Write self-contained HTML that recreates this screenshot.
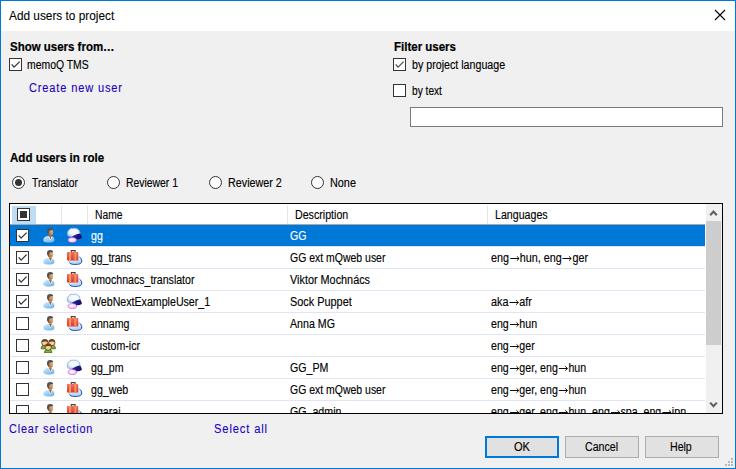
<!DOCTYPE html>
<html><head><meta charset="utf-8">
<style>
html,body{margin:0;padding:0;}
body{width:736px;height:469px;overflow:hidden;position:relative;background:#f0f0f0;font-family:"Liberation Sans",sans-serif;color:#000;}
.a{position:absolute;}
.t{position:absolute;white-space:pre;line-height:16px;transform-origin:0 0;}
.cb{position:absolute;width:11px;height:11px;border:1px solid #333;background:#fff;}
.cb svg{position:absolute;left:0;top:0;}
.rd{position:absolute;width:11px;height:11px;border:1px solid #333;border-radius:50%;background:#fff;}
.gl{position:absolute;left:0;width:695px;height:1px;background:#e3e3f6;}
.btn{position:absolute;top:436px;width:72px;height:20px;border:1px solid #adadad;background:#e1e1e1;}
</style></head><body>
<div class="a" style="left:0;top:0;width:734px;height:467px;border:1px solid #0078d7;"></div>
<div class="a" style="left:1px;top:1px;width:734px;height:30px;background:#fff;"></div>
<div class="t" style="left:9.20px;top:8px;letter-spacing:0.0px;transform:scaleX(0.9860);font-size:12px;-webkit-text-stroke:0.08px currentColor;">Add users to project</div>
<svg class="a" style="left:714px;top:9px" width="12" height="12" viewBox="0 0 12 12"><path d="M1 1L11 11M11 1L1 11" stroke="#000" stroke-width="1.1" fill="none"/></svg>
<div class="t" style="left:9.70px;top:39px;letter-spacing:0.0px;transform:scaleX(0.9565);font-size:12px;font-weight:bold;-webkit-text-stroke:0.22px currentColor;">Show users from…</div>
<div class="cb" style="left:9px;top:58px;"><svg width="11" height="11" viewBox="0 0 11 11"><path d="M1.7 5.4L4.1 8.1L9.6 2.6" stroke="#333" stroke-width="1.3" fill="none"/></svg></div>
<div class="t" style="left:27.40px;top:57px;letter-spacing:0.0px;transform:scaleX(0.8676);font-size:12px;-webkit-text-stroke:0.14px currentColor;">memoQ TMS</div>
<div class="t" style="left:28.70px;top:80px;letter-spacing:0.9px;transform:scaleX(0.9238);font-size:12px;color:#2200c0;-webkit-text-stroke:0.1px currentColor;">Create new user</div>
<div class="t" style="left:393.50px;top:39px;letter-spacing:0.0px;transform:scaleX(0.9578);font-size:12px;font-weight:bold;-webkit-text-stroke:0.22px currentColor;">Filter users</div>
<div class="cb" style="left:393px;top:58px;"><svg width="11" height="11" viewBox="0 0 11 11"><path d="M1.7 5.4L4.1 8.1L9.6 2.6" stroke="#505050" stroke-width="1.3" fill="none"/></svg></div>
<div class="t" style="left:411.50px;top:57px;letter-spacing:0.0px;transform:scaleX(0.8894);font-size:12px;-webkit-text-stroke:0.14px currentColor;">by project language</div>
<div class="cb" style="left:393px;top:84px;"></div>
<div class="t" style="left:411.50px;top:83px;letter-spacing:0.0px;transform:scaleX(0.8472);font-size:12px;-webkit-text-stroke:0.14px currentColor;">by text</div>
<div class="a" style="left:410px;top:107px;width:311px;height:18px;border:1px solid #7a7a7a;background:#fff;"></div>
<div class="t" style="left:9.70px;top:150px;letter-spacing:0.0px;transform:scaleX(0.9612);font-size:12px;font-weight:bold;-webkit-text-stroke:0.22px currentColor;">Add users in role</div>
<div class="rd" style="left:12px;top:176px;"></div>
<div class="a" style="left:15px;top:179px;width:7px;height:7px;border-radius:50%;background:#333;"></div>
<div class="t" style="left:31.50px;top:175px;letter-spacing:0.0px;transform:scaleX(0.8556);font-size:12px;-webkit-text-stroke:0.14px currentColor;">Translator</div>
<div class="rd" style="left:107px;top:176px;"></div>
<div class="t" style="left:126.23px;top:175px;letter-spacing:0.0px;transform:scaleX(0.8661);font-size:12px;-webkit-text-stroke:0.14px currentColor;">Reviewer 1</div>
<div class="rd" style="left:209px;top:176px;"></div>
<div class="t" style="left:227.50px;top:175px;letter-spacing:0.0px;transform:scaleX(0.8966);font-size:12px;-webkit-text-stroke:0.14px currentColor;">Reviewer 2</div>
<div class="rd" style="left:311px;top:176px;"></div>
<div class="t" style="left:329.70px;top:175px;letter-spacing:0.0px;transform:scaleX(0.9037);font-size:12px;-webkit-text-stroke:0.14px currentColor;">None</div>
<div class="a" style="left:9px;top:203px;width:712px;height:209px;border:1px solid #000;background:#fff;"></div>
<div class="a" style="left:10px;top:204px;width:695px;height:209px;overflow:hidden;">
<div class="a" style="left:2px;top:2px;width:24px;height:18px;background:#c0dcf3;"></div>
<div class="cb" style="left:7px;top:4px;"><div class="a" style="left:2px;top:2px;width:7px;height:7px;background:#333;"></div></div>
<div class="a" style="left:51px;top:2px;width:1px;height:18px;background:#e5e5e5;"></div>
<div class="a" style="left:77px;top:2px;width:1px;height:18px;background:#e5e5e5;"></div>
<div class="a" style="left:277px;top:2px;width:1px;height:18px;background:#e5e5e5;"></div>
<div class="a" style="left:477px;top:2px;width:1px;height:18px;background:#e5e5e5;"></div>
<div class="t" style="left:84.54px;top:3px;letter-spacing:0.0px;transform:scaleX(0.8581);font-size:12px;-webkit-text-stroke:0.14px currentColor;">Name</div>
<div class="t" style="left:284.61px;top:3px;letter-spacing:0.0px;transform:scaleX(0.8879);font-size:12px;-webkit-text-stroke:0.14px currentColor;">Description</div>
<div class="t" style="left:484.71px;top:3px;letter-spacing:0.0px;transform:scaleX(0.8862);font-size:12px;-webkit-text-stroke:0.14px currentColor;">Languages</div>
<div class="a" style="left:0;top:20px;width:695px;height:1px;background:#a8a8a8;"></div>
<div class="a" style="left:0;top:21px;width:695px;height:21px;background:#0078d7;"></div>
<div class="gl" style="top:42px;"></div>
<div class="cb" style="left:6px;top:25px;"><svg width="11" height="11" viewBox="0 0 11 11"><path d="M1.7 5.4L4.1 8.1L9.6 2.6" stroke="#333" stroke-width="1.3" fill="none"/></svg></div>
<svg class="a" style="left:31px;top:23px" width="14" height="16" viewBox="0 0 14 16">
<defs><linearGradient id="pb0" x1="0" y1="0" x2="0.8" y2="1"><stop offset="0" stop-color="#d6eefd"/><stop offset="0.5" stop-color="#9fd0f8"/><stop offset="1" stop-color="#6cb2ec"/></linearGradient>
<linearGradient id="pf0" x1="1" y1="0" x2="0.1" y2="1"><stop offset="0" stop-color="#f6d4ae"/><stop offset="0.55" stop-color="#c89060"/><stop offset="1" stop-color="#8a5428"/></linearGradient></defs>
<path d="M2.3 13C2.3 10.8 4 9.3 6.8 9L9.6 9C12.2 9.3 13.4 10.8 13.4 13C13.4 15 11 15.6 8 15.6C5 15.6 2.3 15 2.3 13Z" fill="url(#pb0)"/>
<path d="M8.2 8.4L10.6 8.4L10.6 9.6L9.4 12.6L8.2 9.6Z" fill="#a06a38"/>
<path d="M8 9.4L9.4 12.8L10.8 9.4L11.6 9.6L9.4 13.6L7.2 9.6Z" fill="#f2f9ff"/>
<ellipse cx="9.4" cy="5.2" rx="2.7" ry="3.6" fill="url(#pf0)"/>
<path d="M6 4.4C5.9 2.1 7.2 1.1 9.2 1.1C11.2 1.1 12.2 2 12.1 3.3C10.6 3 8.8 3.2 8.1 4.2L7.6 7.4C6.6 6.6 6 5.6 6 4.4Z" fill="#505050"/>
</svg>
<svg class="a" style="left:54px;top:21px" width="19" height="19" viewBox="0 0 19 19">
<defs><radialGradient id="cw0" cx="0.55" cy="0.4" r="0.7"><stop offset="0" stop-color="#ffffff"/><stop offset="0.55" stop-color="#eaf3fc"/><stop offset="1" stop-color="#9cc0e8"/></radialGradient>
<linearGradient id="cn0" x1="0" y1="0" x2="1" y2="0.5"><stop offset="0" stop-color="#4060c8"/><stop offset="0.4" stop-color="#10269a"/><stop offset="1" stop-color="#2a0662"/></linearGradient>
<radialGradient id="cp0" cx="0.45" cy="0.4" r="0.65"><stop offset="0" stop-color="#ffffff"/><stop offset="0.6" stop-color="#fad0fa"/><stop offset="1" stop-color="#e48ae8"/></radialGradient></defs>
<path d="M7 3.2L12.4 3.2L15.2 5.2L16.2 8.2L15.6 9.2L11.5 10L8 11.8L5 11.6L3.4 10.2L3.2 7.8L4.4 5.2Z" fill="url(#cw0)" stroke="#78a2d4" stroke-width="0.7" stroke-linejoin="round"/>
<path d="M7.6 12C10 10.8 12.6 9.2 16 8.6C17.2 10 18 11.8 17.8 13C15.6 14.4 12.2 14.6 9.8 13.8Z" fill="url(#cn0)"/>
<ellipse cx="8.3" cy="15.1" rx="4.3" ry="2.5" fill="url(#cp0)" stroke="#c458cc" stroke-width="0.6"/>
</svg>
<div class="t" style="left:80.50px;top:24px;letter-spacing:0.0px;transform:scaleX(0.8858);font-size:12px;-webkit-text-stroke:0.14px currentColor;color:#fff;">gg</div>
<div class="t" style="left:280.40px;top:24px;letter-spacing:0.0px;transform:scaleX(0.8858);font-size:12px;-webkit-text-stroke:0.14px currentColor;color:#fff;">GG</div>
<div class="gl" style="top:64px;"></div>
<div class="cb" style="left:6px;top:47px;"><svg width="11" height="11" viewBox="0 0 11 11"><path d="M1.7 5.4L4.1 8.1L9.6 2.6" stroke="#333" stroke-width="1.3" fill="none"/></svg></div>
<svg class="a" style="left:31px;top:45px" width="14" height="16" viewBox="0 0 14 16">
<defs><linearGradient id="pb1" x1="0" y1="0" x2="0.8" y2="1"><stop offset="0" stop-color="#d6eefd"/><stop offset="0.5" stop-color="#9fd0f8"/><stop offset="1" stop-color="#6cb2ec"/></linearGradient>
<linearGradient id="pf1" x1="1" y1="0" x2="0.1" y2="1"><stop offset="0" stop-color="#f6d4ae"/><stop offset="0.55" stop-color="#c89060"/><stop offset="1" stop-color="#8a5428"/></linearGradient></defs>
<path d="M2.3 13C2.3 10.8 4 9.3 6.8 9L9.6 9C12.2 9.3 13.4 10.8 13.4 13C13.4 15 11 15.6 8 15.6C5 15.6 2.3 15 2.3 13Z" fill="url(#pb1)"/>
<path d="M8.2 8.4L10.6 8.4L10.6 9.6L9.4 12.6L8.2 9.6Z" fill="#a06a38"/>
<path d="M8 9.4L9.4 12.8L10.8 9.4L11.6 9.6L9.4 13.6L7.2 9.6Z" fill="#f2f9ff"/>
<ellipse cx="9.4" cy="5.2" rx="2.7" ry="3.6" fill="url(#pf1)"/>
<path d="M6 4.4C5.9 2.1 7.2 1.1 9.2 1.1C11.2 1.1 12.2 2 12.1 3.3C10.6 3 8.8 3.2 8.1 4.2L7.6 7.4C6.6 6.6 6 5.6 6 4.4Z" fill="#505050"/>
</svg>
<svg class="a" style="left:54px;top:43px" width="19" height="19" viewBox="0 0 19 19">
<defs><linearGradient id="sb1" x1="0" y1="0" x2="0.3" y2="1"><stop offset="0" stop-color="#ffffff"/><stop offset="1" stop-color="#a8d4f6"/></linearGradient>
<linearGradient id="sr1" x1="0" y1="0" x2="0" y2="1"><stop offset="0" stop-color="#f06a78"/><stop offset="1" stop-color="#dc3444"/></linearGradient></defs>
<path d="M4.6 12.4C5 10 9 9.2 13 9.4C16.8 9.8 18.2 12.6 17.6 15.2C17 17.2 13 17.6 9.6 17.4C6 17.2 4.4 15 4.6 12.4Z" fill="url(#sb1)" stroke="#8cb8e8" stroke-width="0.6"/>
<path d="M15.6 10.2C17.4 11.4 18 13.4 17.6 15.2C17 17.2 13 17.6 9.6 17.4C7.6 17.3 6.2 16.6 5.4 15.6" stroke="#2450b0" stroke-width="1" fill="none"/>
<path d="M7.3 5.4L7.3 3.6L11.1 3.6L11.1 5.4" stroke="#5a3a22" stroke-width="1.1" fill="none"/>
<rect x="3" y="5.1" width="11.3" height="8.5" rx="0.8" fill="url(#sr1)"/>
<rect x="5.1" y="5.1" width="1.9" height="8.5" fill="#f4a038"/>
<rect x="10.4" y="5.1" width="1.9" height="8.5" fill="#f4a038"/>
</svg>
<div class="t" style="left:80.60px;top:46px;letter-spacing:0.0px;transform:scaleX(0.8681);font-size:12px;-webkit-text-stroke:0.14px currentColor;">gg_trans</div>
<div class="t" style="left:280.40px;top:46px;letter-spacing:0.0px;transform:scaleX(0.8725);font-size:12px;-webkit-text-stroke:0.14px currentColor;">GG ext mQweb user</div>
<div class="t" style="left:480.80px;top:46px;letter-spacing:0.0px;transform:scaleX(0.8981);font-size:12px;-webkit-text-stroke:0.14px currentColor;">eng<svg width="11" height="7" style="vertical-align:0;margin:0 0.5px 0 0.5px" viewBox="0 0 11 7"><path d="M0.5 3.5H10.3M7.8 1.3L10.3 3.5L7.8 5.7" stroke="#000" stroke-width="1" fill="none"/></svg>hun, eng<svg width="11" height="7" style="vertical-align:0;margin:0 0.5px 0 0.5px" viewBox="0 0 11 7"><path d="M0.5 3.5H10.3M7.8 1.3L10.3 3.5L7.8 5.7" stroke="#000" stroke-width="1" fill="none"/></svg>ger</div>
<div class="gl" style="top:86px;"></div>
<div class="cb" style="left:6px;top:69px;"><svg width="11" height="11" viewBox="0 0 11 11"><path d="M1.7 5.4L4.1 8.1L9.6 2.6" stroke="#333" stroke-width="1.3" fill="none"/></svg></div>
<svg class="a" style="left:31px;top:67px" width="14" height="16" viewBox="0 0 14 16">
<defs><linearGradient id="pb2" x1="0" y1="0" x2="0.8" y2="1"><stop offset="0" stop-color="#d6eefd"/><stop offset="0.5" stop-color="#9fd0f8"/><stop offset="1" stop-color="#6cb2ec"/></linearGradient>
<linearGradient id="pf2" x1="1" y1="0" x2="0.1" y2="1"><stop offset="0" stop-color="#f6d4ae"/><stop offset="0.55" stop-color="#c89060"/><stop offset="1" stop-color="#8a5428"/></linearGradient></defs>
<path d="M2.3 13C2.3 10.8 4 9.3 6.8 9L9.6 9C12.2 9.3 13.4 10.8 13.4 13C13.4 15 11 15.6 8 15.6C5 15.6 2.3 15 2.3 13Z" fill="url(#pb2)"/>
<path d="M8.2 8.4L10.6 8.4L10.6 9.6L9.4 12.6L8.2 9.6Z" fill="#a06a38"/>
<path d="M8 9.4L9.4 12.8L10.8 9.4L11.6 9.6L9.4 13.6L7.2 9.6Z" fill="#f2f9ff"/>
<ellipse cx="9.4" cy="5.2" rx="2.7" ry="3.6" fill="url(#pf2)"/>
<path d="M6 4.4C5.9 2.1 7.2 1.1 9.2 1.1C11.2 1.1 12.2 2 12.1 3.3C10.6 3 8.8 3.2 8.1 4.2L7.6 7.4C6.6 6.6 6 5.6 6 4.4Z" fill="#505050"/>
</svg>
<svg class="a" style="left:54px;top:65px" width="19" height="19" viewBox="0 0 19 19">
<defs><linearGradient id="sb2" x1="0" y1="0" x2="0.3" y2="1"><stop offset="0" stop-color="#ffffff"/><stop offset="1" stop-color="#a8d4f6"/></linearGradient>
<linearGradient id="sr2" x1="0" y1="0" x2="0" y2="1"><stop offset="0" stop-color="#f06a78"/><stop offset="1" stop-color="#dc3444"/></linearGradient></defs>
<path d="M4.6 12.4C5 10 9 9.2 13 9.4C16.8 9.8 18.2 12.6 17.6 15.2C17 17.2 13 17.6 9.6 17.4C6 17.2 4.4 15 4.6 12.4Z" fill="url(#sb2)" stroke="#8cb8e8" stroke-width="0.6"/>
<path d="M15.6 10.2C17.4 11.4 18 13.4 17.6 15.2C17 17.2 13 17.6 9.6 17.4C7.6 17.3 6.2 16.6 5.4 15.6" stroke="#2450b0" stroke-width="1" fill="none"/>
<path d="M7.3 5.4L7.3 3.6L11.1 3.6L11.1 5.4" stroke="#5a3a22" stroke-width="1.1" fill="none"/>
<rect x="3" y="5.1" width="11.3" height="8.5" rx="0.8" fill="url(#sr2)"/>
<rect x="5.1" y="5.1" width="1.9" height="8.5" fill="#f4a038"/>
<rect x="10.4" y="5.1" width="1.9" height="8.5" fill="#f4a038"/>
</svg>
<div class="t" style="left:80.50px;top:68px;letter-spacing:0.0px;transform:scaleX(0.8814);font-size:12px;-webkit-text-stroke:0.14px currentColor;">vmochnacs_translator</div>
<div class="t" style="left:280.40px;top:68px;letter-spacing:0.0px;transform:scaleX(0.9045);font-size:12px;-webkit-text-stroke:0.14px currentColor;">Viktor Mochnács</div>
<div class="gl" style="top:108px;"></div>
<div class="cb" style="left:6px;top:91px;"><svg width="11" height="11" viewBox="0 0 11 11"><path d="M1.7 5.4L4.1 8.1L9.6 2.6" stroke="#333" stroke-width="1.3" fill="none"/></svg></div>
<svg class="a" style="left:31px;top:89px" width="14" height="16" viewBox="0 0 14 16">
<defs><linearGradient id="pb3" x1="0" y1="0" x2="0.8" y2="1"><stop offset="0" stop-color="#d6eefd"/><stop offset="0.5" stop-color="#9fd0f8"/><stop offset="1" stop-color="#6cb2ec"/></linearGradient>
<linearGradient id="pf3" x1="1" y1="0" x2="0.1" y2="1"><stop offset="0" stop-color="#f6d4ae"/><stop offset="0.55" stop-color="#c89060"/><stop offset="1" stop-color="#8a5428"/></linearGradient></defs>
<path d="M2.3 13C2.3 10.8 4 9.3 6.8 9L9.6 9C12.2 9.3 13.4 10.8 13.4 13C13.4 15 11 15.6 8 15.6C5 15.6 2.3 15 2.3 13Z" fill="url(#pb3)"/>
<path d="M8.2 8.4L10.6 8.4L10.6 9.6L9.4 12.6L8.2 9.6Z" fill="#a06a38"/>
<path d="M8 9.4L9.4 12.8L10.8 9.4L11.6 9.6L9.4 13.6L7.2 9.6Z" fill="#f2f9ff"/>
<ellipse cx="9.4" cy="5.2" rx="2.7" ry="3.6" fill="url(#pf3)"/>
<path d="M6 4.4C5.9 2.1 7.2 1.1 9.2 1.1C11.2 1.1 12.2 2 12.1 3.3C10.6 3 8.8 3.2 8.1 4.2L7.6 7.4C6.6 6.6 6 5.6 6 4.4Z" fill="#505050"/>
</svg>
<svg class="a" style="left:54px;top:87px" width="19" height="19" viewBox="0 0 19 19">
<defs><radialGradient id="cw3" cx="0.55" cy="0.4" r="0.7"><stop offset="0" stop-color="#ffffff"/><stop offset="0.55" stop-color="#eaf3fc"/><stop offset="1" stop-color="#9cc0e8"/></radialGradient>
<linearGradient id="cn3" x1="0" y1="0" x2="1" y2="0.5"><stop offset="0" stop-color="#4060c8"/><stop offset="0.4" stop-color="#10269a"/><stop offset="1" stop-color="#2a0662"/></linearGradient>
<radialGradient id="cp3" cx="0.45" cy="0.4" r="0.65"><stop offset="0" stop-color="#ffffff"/><stop offset="0.6" stop-color="#fad0fa"/><stop offset="1" stop-color="#e48ae8"/></radialGradient></defs>
<path d="M7 3.2L12.4 3.2L15.2 5.2L16.2 8.2L15.6 9.2L11.5 10L8 11.8L5 11.6L3.4 10.2L3.2 7.8L4.4 5.2Z" fill="url(#cw3)" stroke="#78a2d4" stroke-width="0.7" stroke-linejoin="round"/>
<path d="M7.6 12C10 10.8 12.6 9.2 16 8.6C17.2 10 18 11.8 17.8 13C15.6 14.4 12.2 14.6 9.8 13.8Z" fill="url(#cn3)"/>
<ellipse cx="8.3" cy="15.1" rx="4.3" ry="2.5" fill="url(#cp3)" stroke="#c458cc" stroke-width="0.6"/>
</svg>
<div class="t" style="left:80.50px;top:90px;letter-spacing:0.0px;transform:scaleX(0.8858);font-size:12px;-webkit-text-stroke:0.14px currentColor;">WebNextExampleUser_1</div>
<div class="t" style="left:280.29px;top:90px;letter-spacing:0.0px;transform:scaleX(0.9075);font-size:12px;-webkit-text-stroke:0.14px currentColor;">Sock Puppet</div>
<div class="t" style="left:481.00px;top:90px;letter-spacing:0.0px;transform:scaleX(0.9022);font-size:12px;-webkit-text-stroke:0.14px currentColor;">aka<svg width="11" height="7" style="vertical-align:0;margin:0 0.5px 0 0.5px" viewBox="0 0 11 7"><path d="M0.5 3.5H10.3M7.8 1.3L10.3 3.5L7.8 5.7" stroke="#000" stroke-width="1" fill="none"/></svg>afr</div>
<div class="gl" style="top:130px;"></div>
<div class="cb" style="left:6px;top:113px;"></div>
<svg class="a" style="left:31px;top:111px" width="14" height="16" viewBox="0 0 14 16">
<defs><linearGradient id="pb4" x1="0" y1="0" x2="0.8" y2="1"><stop offset="0" stop-color="#d6eefd"/><stop offset="0.5" stop-color="#9fd0f8"/><stop offset="1" stop-color="#6cb2ec"/></linearGradient>
<linearGradient id="pf4" x1="1" y1="0" x2="0.1" y2="1"><stop offset="0" stop-color="#f6d4ae"/><stop offset="0.55" stop-color="#c89060"/><stop offset="1" stop-color="#8a5428"/></linearGradient></defs>
<path d="M2.3 13C2.3 10.8 4 9.3 6.8 9L9.6 9C12.2 9.3 13.4 10.8 13.4 13C13.4 15 11 15.6 8 15.6C5 15.6 2.3 15 2.3 13Z" fill="url(#pb4)"/>
<path d="M8.2 8.4L10.6 8.4L10.6 9.6L9.4 12.6L8.2 9.6Z" fill="#a06a38"/>
<path d="M8 9.4L9.4 12.8L10.8 9.4L11.6 9.6L9.4 13.6L7.2 9.6Z" fill="#f2f9ff"/>
<ellipse cx="9.4" cy="5.2" rx="2.7" ry="3.6" fill="url(#pf4)"/>
<path d="M6 4.4C5.9 2.1 7.2 1.1 9.2 1.1C11.2 1.1 12.2 2 12.1 3.3C10.6 3 8.8 3.2 8.1 4.2L7.6 7.4C6.6 6.6 6 5.6 6 4.4Z" fill="#505050"/>
</svg>
<svg class="a" style="left:54px;top:109px" width="19" height="19" viewBox="0 0 19 19">
<defs><linearGradient id="sb4" x1="0" y1="0" x2="0.3" y2="1"><stop offset="0" stop-color="#ffffff"/><stop offset="1" stop-color="#a8d4f6"/></linearGradient>
<linearGradient id="sr4" x1="0" y1="0" x2="0" y2="1"><stop offset="0" stop-color="#f06a78"/><stop offset="1" stop-color="#dc3444"/></linearGradient></defs>
<path d="M4.6 12.4C5 10 9 9.2 13 9.4C16.8 9.8 18.2 12.6 17.6 15.2C17 17.2 13 17.6 9.6 17.4C6 17.2 4.4 15 4.6 12.4Z" fill="url(#sb4)" stroke="#8cb8e8" stroke-width="0.6"/>
<path d="M15.6 10.2C17.4 11.4 18 13.4 17.6 15.2C17 17.2 13 17.6 9.6 17.4C7.6 17.3 6.2 16.6 5.4 15.6" stroke="#2450b0" stroke-width="1" fill="none"/>
<path d="M7.3 5.4L7.3 3.6L11.1 3.6L11.1 5.4" stroke="#5a3a22" stroke-width="1.1" fill="none"/>
<rect x="3" y="5.1" width="11.3" height="8.5" rx="0.8" fill="url(#sr4)"/>
<rect x="5.1" y="5.1" width="1.9" height="8.5" fill="#f4a038"/>
<rect x="10.4" y="5.1" width="1.9" height="8.5" fill="#f4a038"/>
</svg>
<div class="t" style="left:80.50px;top:112px;letter-spacing:0.0px;transform:scaleX(0.8858);font-size:12px;-webkit-text-stroke:0.14px currentColor;">annamg</div>
<div class="t" style="left:280.40px;top:112px;letter-spacing:0.0px;transform:scaleX(0.8858);font-size:12px;-webkit-text-stroke:0.14px currentColor;">Anna MG</div>
<div class="t" style="left:480.80px;top:112px;letter-spacing:0.0px;transform:scaleX(0.8858);font-size:12px;-webkit-text-stroke:0.14px currentColor;">eng<svg width="11" height="7" style="vertical-align:0;margin:0 0.5px 0 0.5px" viewBox="0 0 11 7"><path d="M0.5 3.5H10.3M7.8 1.3L10.3 3.5L7.8 5.7" stroke="#000" stroke-width="1" fill="none"/></svg>hun</div>
<div class="gl" style="top:152px;"></div>
<div class="cb" style="left:6px;top:135px;"></div>
<svg class="a" style="left:29px;top:132px" width="17" height="17" viewBox="0 0 17 17">
<g stroke="#2a4a08" stroke-width="0.7">
<path d="M2.2 12.8C2 10.6 3.2 9 5.8 9C8.4 9 9.6 10.6 9.4 12.8Z" fill="#74bc22"/>
<path d="M9.2 12.8C9 10.6 10.2 9 12.8 9C15.4 9 16.6 10.6 16.4 12.8Z" fill="#74bc22"/>
</g>
<circle cx="5.8" cy="6.6" r="3.2" fill="#f8cc9c" stroke="#3a2a1a" stroke-width="0.7"/>
<path d="M2.6 6.4C2.8 4 4.2 3.3 5.8 3.3C7.6 3.3 9 4.2 9 6.2C7.6 5.4 4.6 5.2 2.6 6.4Z" fill="#6a4418"/>
<circle cx="12.8" cy="6.6" r="3.2" fill="#f8cc9c" stroke="#3a2a1a" stroke-width="0.7"/>
<path d="M9.6 6.4C9.8 4 11.2 3.3 12.8 3.3C14.6 3.3 16 4.2 16 6.2C14.6 5.4 11.6 5.2 9.6 6.4Z" fill="#6a4418"/>
<path d="M5.6 17C5.4 14.6 6.8 13 9.2 13C11.6 13 13 14.6 12.8 17Z" fill="#74bc22" stroke="#2a4a08" stroke-width="0.7"/>
<circle cx="9.2" cy="11" r="3.3" fill="#f8cc9c" stroke="#3a2a1a" stroke-width="0.7"/>
<path d="M5.9 10.8C6 8.5 7.5 7.7 9.2 7.7C11 7.7 12.5 8.7 12.5 10.6C11 9.8 8 9.6 5.9 10.8Z" fill="#6a4418"/>
</svg>
<div class="t" style="left:80.50px;top:134px;letter-spacing:0.0px;transform:scaleX(0.8858);font-size:12px;-webkit-text-stroke:0.14px currentColor;">custom-icr</div>
<div class="t" style="left:480.80px;top:134px;letter-spacing:0.0px;transform:scaleX(0.8858);font-size:12px;-webkit-text-stroke:0.14px currentColor;">eng<svg width="11" height="7" style="vertical-align:0;margin:0 0.5px 0 0.5px" viewBox="0 0 11 7"><path d="M0.5 3.5H10.3M7.8 1.3L10.3 3.5L7.8 5.7" stroke="#000" stroke-width="1" fill="none"/></svg>ger</div>
<div class="gl" style="top:174px;"></div>
<div class="cb" style="left:6px;top:157px;"></div>
<svg class="a" style="left:31px;top:155px" width="14" height="16" viewBox="0 0 14 16">
<defs><linearGradient id="pb6" x1="0" y1="0" x2="0.8" y2="1"><stop offset="0" stop-color="#d6eefd"/><stop offset="0.5" stop-color="#9fd0f8"/><stop offset="1" stop-color="#6cb2ec"/></linearGradient>
<linearGradient id="pf6" x1="1" y1="0" x2="0.1" y2="1"><stop offset="0" stop-color="#f6d4ae"/><stop offset="0.55" stop-color="#c89060"/><stop offset="1" stop-color="#8a5428"/></linearGradient></defs>
<path d="M2.3 13C2.3 10.8 4 9.3 6.8 9L9.6 9C12.2 9.3 13.4 10.8 13.4 13C13.4 15 11 15.6 8 15.6C5 15.6 2.3 15 2.3 13Z" fill="url(#pb6)"/>
<path d="M8.2 8.4L10.6 8.4L10.6 9.6L9.4 12.6L8.2 9.6Z" fill="#a06a38"/>
<path d="M8 9.4L9.4 12.8L10.8 9.4L11.6 9.6L9.4 13.6L7.2 9.6Z" fill="#f2f9ff"/>
<ellipse cx="9.4" cy="5.2" rx="2.7" ry="3.6" fill="url(#pf6)"/>
<path d="M6 4.4C5.9 2.1 7.2 1.1 9.2 1.1C11.2 1.1 12.2 2 12.1 3.3C10.6 3 8.8 3.2 8.1 4.2L7.6 7.4C6.6 6.6 6 5.6 6 4.4Z" fill="#505050"/>
</svg>
<svg class="a" style="left:54px;top:153px" width="19" height="19" viewBox="0 0 19 19">
<defs><radialGradient id="cw6" cx="0.55" cy="0.4" r="0.7"><stop offset="0" stop-color="#ffffff"/><stop offset="0.55" stop-color="#eaf3fc"/><stop offset="1" stop-color="#9cc0e8"/></radialGradient>
<linearGradient id="cn6" x1="0" y1="0" x2="1" y2="0.5"><stop offset="0" stop-color="#4060c8"/><stop offset="0.4" stop-color="#10269a"/><stop offset="1" stop-color="#2a0662"/></linearGradient>
<radialGradient id="cp6" cx="0.45" cy="0.4" r="0.65"><stop offset="0" stop-color="#ffffff"/><stop offset="0.6" stop-color="#fad0fa"/><stop offset="1" stop-color="#e48ae8"/></radialGradient></defs>
<path d="M7 3.2L12.4 3.2L15.2 5.2L16.2 8.2L15.6 9.2L11.5 10L8 11.8L5 11.6L3.4 10.2L3.2 7.8L4.4 5.2Z" fill="url(#cw6)" stroke="#78a2d4" stroke-width="0.7" stroke-linejoin="round"/>
<path d="M7.6 12C10 10.8 12.6 9.2 16 8.6C17.2 10 18 11.8 17.8 13C15.6 14.4 12.2 14.6 9.8 13.8Z" fill="url(#cn6)"/>
<ellipse cx="8.3" cy="15.1" rx="4.3" ry="2.5" fill="url(#cp6)" stroke="#c458cc" stroke-width="0.6"/>
</svg>
<div class="t" style="left:80.50px;top:156px;letter-spacing:0.0px;transform:scaleX(0.8858);font-size:12px;-webkit-text-stroke:0.14px currentColor;">gg_pm</div>
<div class="t" style="left:280.40px;top:156px;letter-spacing:0.0px;transform:scaleX(0.8858);font-size:12px;-webkit-text-stroke:0.14px currentColor;">GG_PM</div>
<div class="t" style="left:480.80px;top:156px;letter-spacing:0.0px;transform:scaleX(0.8858);font-size:12px;-webkit-text-stroke:0.14px currentColor;">eng<svg width="11" height="7" style="vertical-align:0;margin:0 0.5px 0 0.5px" viewBox="0 0 11 7"><path d="M0.5 3.5H10.3M7.8 1.3L10.3 3.5L7.8 5.7" stroke="#000" stroke-width="1" fill="none"/></svg>ger, eng<svg width="11" height="7" style="vertical-align:0;margin:0 0.5px 0 0.5px" viewBox="0 0 11 7"><path d="M0.5 3.5H10.3M7.8 1.3L10.3 3.5L7.8 5.7" stroke="#000" stroke-width="1" fill="none"/></svg>hun</div>
<div class="gl" style="top:196px;"></div>
<div class="cb" style="left:6px;top:179px;"></div>
<svg class="a" style="left:31px;top:177px" width="14" height="16" viewBox="0 0 14 16">
<defs><linearGradient id="pb7" x1="0" y1="0" x2="0.8" y2="1"><stop offset="0" stop-color="#d6eefd"/><stop offset="0.5" stop-color="#9fd0f8"/><stop offset="1" stop-color="#6cb2ec"/></linearGradient>
<linearGradient id="pf7" x1="1" y1="0" x2="0.1" y2="1"><stop offset="0" stop-color="#f6d4ae"/><stop offset="0.55" stop-color="#c89060"/><stop offset="1" stop-color="#8a5428"/></linearGradient></defs>
<path d="M2.3 13C2.3 10.8 4 9.3 6.8 9L9.6 9C12.2 9.3 13.4 10.8 13.4 13C13.4 15 11 15.6 8 15.6C5 15.6 2.3 15 2.3 13Z" fill="url(#pb7)"/>
<path d="M8.2 8.4L10.6 8.4L10.6 9.6L9.4 12.6L8.2 9.6Z" fill="#a06a38"/>
<path d="M8 9.4L9.4 12.8L10.8 9.4L11.6 9.6L9.4 13.6L7.2 9.6Z" fill="#f2f9ff"/>
<ellipse cx="9.4" cy="5.2" rx="2.7" ry="3.6" fill="url(#pf7)"/>
<path d="M6 4.4C5.9 2.1 7.2 1.1 9.2 1.1C11.2 1.1 12.2 2 12.1 3.3C10.6 3 8.8 3.2 8.1 4.2L7.6 7.4C6.6 6.6 6 5.6 6 4.4Z" fill="#505050"/>
</svg>
<svg class="a" style="left:54px;top:175px" width="19" height="19" viewBox="0 0 19 19">
<defs><linearGradient id="sb7" x1="0" y1="0" x2="0.3" y2="1"><stop offset="0" stop-color="#ffffff"/><stop offset="1" stop-color="#a8d4f6"/></linearGradient>
<linearGradient id="sr7" x1="0" y1="0" x2="0" y2="1"><stop offset="0" stop-color="#f06a78"/><stop offset="1" stop-color="#dc3444"/></linearGradient></defs>
<path d="M4.6 12.4C5 10 9 9.2 13 9.4C16.8 9.8 18.2 12.6 17.6 15.2C17 17.2 13 17.6 9.6 17.4C6 17.2 4.4 15 4.6 12.4Z" fill="url(#sb7)" stroke="#8cb8e8" stroke-width="0.6"/>
<path d="M15.6 10.2C17.4 11.4 18 13.4 17.6 15.2C17 17.2 13 17.6 9.6 17.4C7.6 17.3 6.2 16.6 5.4 15.6" stroke="#2450b0" stroke-width="1" fill="none"/>
<path d="M7.3 5.4L7.3 3.6L11.1 3.6L11.1 5.4" stroke="#5a3a22" stroke-width="1.1" fill="none"/>
<rect x="3" y="5.1" width="11.3" height="8.5" rx="0.8" fill="url(#sr7)"/>
<rect x="5.1" y="5.1" width="1.9" height="8.5" fill="#f4a038"/>
<rect x="10.4" y="5.1" width="1.9" height="8.5" fill="#f4a038"/>
</svg>
<div class="t" style="left:80.50px;top:178px;letter-spacing:0.0px;transform:scaleX(0.8858);font-size:12px;-webkit-text-stroke:0.14px currentColor;">gg_web</div>
<div class="t" style="left:280.40px;top:178px;letter-spacing:0.0px;transform:scaleX(0.8725);font-size:12px;-webkit-text-stroke:0.14px currentColor;">GG ext mQweb user</div>
<div class="t" style="left:480.80px;top:178px;letter-spacing:0.0px;transform:scaleX(0.8858);font-size:12px;-webkit-text-stroke:0.14px currentColor;">eng<svg width="11" height="7" style="vertical-align:0;margin:0 0.5px 0 0.5px" viewBox="0 0 11 7"><path d="M0.5 3.5H10.3M7.8 1.3L10.3 3.5L7.8 5.7" stroke="#000" stroke-width="1" fill="none"/></svg>ger, eng<svg width="11" height="7" style="vertical-align:0;margin:0 0.5px 0 0.5px" viewBox="0 0 11 7"><path d="M0.5 3.5H10.3M7.8 1.3L10.3 3.5L7.8 5.7" stroke="#000" stroke-width="1" fill="none"/></svg>hun</div>
<div class="gl" style="top:218px;"></div>
<div class="cb" style="left:6px;top:201px;"></div>
<svg class="a" style="left:31px;top:199px" width="14" height="16" viewBox="0 0 14 16">
<defs><linearGradient id="pb8" x1="0" y1="0" x2="0.8" y2="1"><stop offset="0" stop-color="#d6eefd"/><stop offset="0.5" stop-color="#9fd0f8"/><stop offset="1" stop-color="#6cb2ec"/></linearGradient>
<linearGradient id="pf8" x1="1" y1="0" x2="0.1" y2="1"><stop offset="0" stop-color="#f6d4ae"/><stop offset="0.55" stop-color="#c89060"/><stop offset="1" stop-color="#8a5428"/></linearGradient></defs>
<path d="M2.3 13C2.3 10.8 4 9.3 6.8 9L9.6 9C12.2 9.3 13.4 10.8 13.4 13C13.4 15 11 15.6 8 15.6C5 15.6 2.3 15 2.3 13Z" fill="url(#pb8)"/>
<path d="M8.2 8.4L10.6 8.4L10.6 9.6L9.4 12.6L8.2 9.6Z" fill="#a06a38"/>
<path d="M8 9.4L9.4 12.8L10.8 9.4L11.6 9.6L9.4 13.6L7.2 9.6Z" fill="#f2f9ff"/>
<ellipse cx="9.4" cy="5.2" rx="2.7" ry="3.6" fill="url(#pf8)"/>
<path d="M6 4.4C5.9 2.1 7.2 1.1 9.2 1.1C11.2 1.1 12.2 2 12.1 3.3C10.6 3 8.8 3.2 8.1 4.2L7.6 7.4C6.6 6.6 6 5.6 6 4.4Z" fill="#505050"/>
</svg>
<svg class="a" style="left:54px;top:197px" width="19" height="19" viewBox="0 0 19 19">
<defs><linearGradient id="sb8" x1="0" y1="0" x2="0.3" y2="1"><stop offset="0" stop-color="#ffffff"/><stop offset="1" stop-color="#a8d4f6"/></linearGradient>
<linearGradient id="sr8" x1="0" y1="0" x2="0" y2="1"><stop offset="0" stop-color="#f06a78"/><stop offset="1" stop-color="#dc3444"/></linearGradient></defs>
<path d="M4.6 12.4C5 10 9 9.2 13 9.4C16.8 9.8 18.2 12.6 17.6 15.2C17 17.2 13 17.6 9.6 17.4C6 17.2 4.4 15 4.6 12.4Z" fill="url(#sb8)" stroke="#8cb8e8" stroke-width="0.6"/>
<path d="M15.6 10.2C17.4 11.4 18 13.4 17.6 15.2C17 17.2 13 17.6 9.6 17.4C7.6 17.3 6.2 16.6 5.4 15.6" stroke="#2450b0" stroke-width="1" fill="none"/>
<path d="M7.3 5.4L7.3 3.6L11.1 3.6L11.1 5.4" stroke="#5a3a22" stroke-width="1.1" fill="none"/>
<rect x="3" y="5.1" width="11.3" height="8.5" rx="0.8" fill="url(#sr8)"/>
<rect x="5.1" y="5.1" width="1.9" height="8.5" fill="#f4a038"/>
<rect x="10.4" y="5.1" width="1.9" height="8.5" fill="#f4a038"/>
</svg>
<div class="t" style="left:80.50px;top:200px;letter-spacing:0.0px;transform:scaleX(0.8858);font-size:12px;-webkit-text-stroke:0.14px currentColor;">ggarai</div>
<div class="t" style="left:280.40px;top:200px;letter-spacing:0.0px;transform:scaleX(0.8858);font-size:12px;-webkit-text-stroke:0.14px currentColor;">GG_admin</div>
<div class="t" style="left:480.80px;top:200px;letter-spacing:0.0px;transform:scaleX(0.8858);font-size:12px;-webkit-text-stroke:0.14px currentColor;">eng<svg width="11" height="7" style="vertical-align:0;margin:0 0.5px 0 0.5px" viewBox="0 0 11 7"><path d="M0.5 3.5H10.3M7.8 1.3L10.3 3.5L7.8 5.7" stroke="#000" stroke-width="1" fill="none"/></svg>ger, eng<svg width="11" height="7" style="vertical-align:0;margin:0 0.5px 0 0.5px" viewBox="0 0 11 7"><path d="M0.5 3.5H10.3M7.8 1.3L10.3 3.5L7.8 5.7" stroke="#000" stroke-width="1" fill="none"/></svg>hun, eng<svg width="11" height="7" style="vertical-align:0;margin:0 0.5px 0 0.5px" viewBox="0 0 11 7"><path d="M0.5 3.5H10.3M7.8 1.3L10.3 3.5L7.8 5.7" stroke="#000" stroke-width="1" fill="none"/></svg>spa, eng<svg width="11" height="7" style="vertical-align:0;margin:0 0.5px 0 0.5px" viewBox="0 0 11 7"><path d="M0.5 3.5H10.3M7.8 1.3L10.3 3.5L7.8 5.7" stroke="#000" stroke-width="1" fill="none"/></svg>jpn</div>
</div>
<div class="a" style="left:706px;top:204px;width:16px;height:209px;background:#f0f0f0;"></div>
<div class="a" style="left:706px;top:221px;width:15px;height:124px;background:#cdcdcd;"></div>
<svg class="a" style="left:705px;top:204px" width="17" height="17" viewBox="0 0 17 17"><path d="M5.2 11.2L8.5 7.6L11.8 11.2" stroke="#606060" stroke-width="2.1" fill="none"/></svg>
<svg class="a" style="left:705px;top:396px" width="17" height="17" viewBox="0 0 17 17"><path d="M5.2 6.6L8.5 10.2L11.8 6.6" stroke="#606060" stroke-width="2.1" fill="none"/></svg>
<div class="t" style="left:8.80px;top:421px;letter-spacing:0.9px;transform:scaleX(0.9066);font-size:12px;color:#2200c0;-webkit-text-stroke:0.1px currentColor;">Clear selection</div>
<div class="t" style="left:214.27px;top:421px;letter-spacing:0.9px;transform:scaleX(0.9345);font-size:12px;color:#2200c0;-webkit-text-stroke:0.1px currentColor;">Select all</div>
<div class="btn" style="left:485px;width:70px;height:18px;border:2px solid #0078d7;"></div>
<div class="btn" style="left:565px;"></div>
<div class="btn" style="left:645px;"></div>
<div class="t" style="left:513.60px;top:439px;letter-spacing:0.0px;transform:scaleX(0.9235);font-size:12px;-webkit-text-stroke:0.14px currentColor;">OK</div>
<div class="t" style="left:584.60px;top:439px;letter-spacing:0.0px;transform:scaleX(0.8838);font-size:12px;-webkit-text-stroke:0.14px currentColor;">Cancel</div>
<div class="t" style="left:670.12px;top:439px;letter-spacing:0.0px;transform:scaleX(0.8804);font-size:12px;-webkit-text-stroke:0.14px currentColor;">Help</div>
<div class="a" style="left:731px;top:458px;width:2px;height:2px;background:#b8b8b8;"></div>
<div class="a" style="left:728px;top:461px;width:2px;height:2px;background:#b8b8b8;"></div>
<div class="a" style="left:731px;top:461px;width:2px;height:2px;background:#b8b8b8;"></div>
<div class="a" style="left:725px;top:464px;width:2px;height:2px;background:#b8b8b8;"></div>
<div class="a" style="left:728px;top:464px;width:2px;height:2px;background:#b8b8b8;"></div>
<div class="a" style="left:731px;top:464px;width:2px;height:2px;background:#b8b8b8;"></div>
</body></html>
